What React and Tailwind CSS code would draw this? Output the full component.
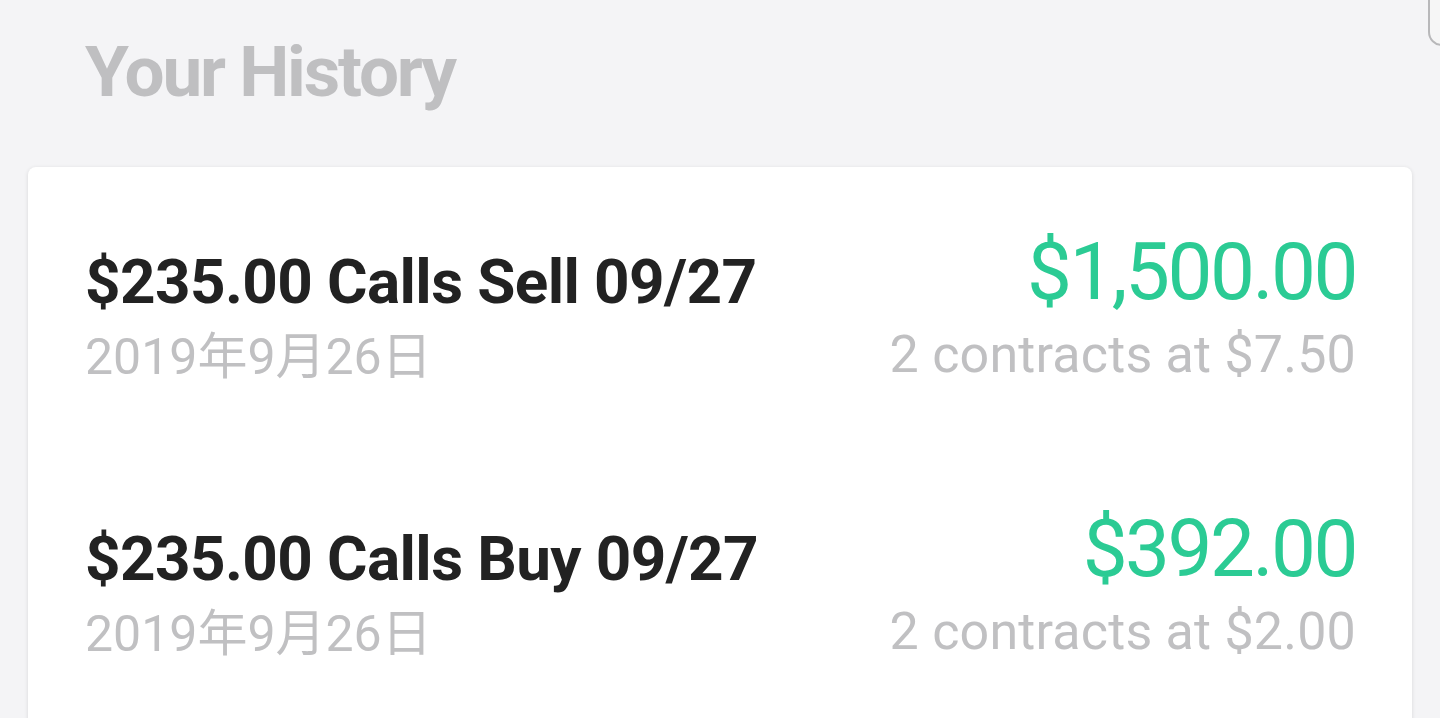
const trades = [
  {
    title: "$235.00 Calls Sell 09/27",
    date: "2019年9月26日",
    amount: "$1,500.00",
    detail: "2 contracts at $7.50",
  },
  {
    title: "$235.00 Calls Buy 09/27",
    date: "2019年9月26日",
    amount: "$392.00",
    detail: "2 contracts at $2.00",
  },
];

const font = { fontFamily: '"Roboto", "Noto Sans CJK SC", sans-serif' };

export default function App() {
  return (
    <div
      className="relative min-h-[718px] h-[718px] overflow-hidden bg-[#f4f4f6]"
      style={font}
    >
      {/* scroll handle peeking at the edge */}
      <div className="absolute right-[-20px] top-[-20px] w-[32px] h-[66px] rounded-[14px] border-2 border-[#b8b8ba] bg-[#f6f6f6]" />

      <h1 className="pl-[85px] pt-[27px] text-[71px] leading-[90px] font-bold text-[#bfbfc1] tracking-[-2.2px]">
        Your History
      </h1>

      <div className="mx-[28px] mt-[50px] rounded-[8px] bg-white shadow-[0_1px_4px_rgba(0,0,0,0.12)] pl-[57px] pr-[56px] pt-[65px] pb-[200px] flex flex-col gap-[111px]">
        {trades.map((t) => (
          <div key={t.title} className="flex justify-between items-start">
            <div className="flex flex-col">
              <span className="text-[62px] leading-[99px] font-bold text-[#222] tracking-[-0.6px]">
                {t.title}
              </span>
              <span className="text-[50px] leading-[52px] text-[#c0c0c2]">
                {t.date}
              </span>
            </div>
            <div className="flex flex-col items-end">
              <span className="text-[80px] leading-[80px] text-[#2bcb94] tracking-[-2.5px]">
                {t.amount}
              </span>
              <span className="text-[52px] leading-[86px] text-[#c0c0c2] tracking-[0.2px]">
                {t.detail}
              </span>
            </div>
          </div>
        ))}
      </div>
    </div>
  );
}
